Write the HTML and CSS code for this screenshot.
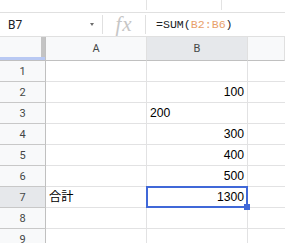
FILE: index.html
```html
<!DOCTYPE html>
<html lang="ja">
<head>
<meta charset="utf-8">
<link rel="stylesheet" href="styles.css">
</head>
<body>
<div class="app">
  <div class="topband"><span class="tick"></span><span class="tick tick2"></span></div>
  <div class="fbar">
    <div class="namebox"><span class="ref">B7</span><span class="caret"></span></div>
    <div class="sep"></div>
    <div class="fx">fx</div>
    <div class="sep"></div>
    <div class="formula">=SUM(<span class="rng">B2:B6</span>)</div>
  </div>
  <div class="grid">
    <div class="corner"><div class="vbar"></div><div class="hbar"></div></div>
    <div class="ch">A</div><div class="ch selh">B</div><div class="ch last"></div>

    <div class="rh">1</div><div class="c"></div><div class="c"></div><div class="c last"></div>
    <div class="rh">2</div><div class="c"></div><div class="c num">100</div><div class="c last"></div>
    <div class="rh">3</div><div class="c"></div><div class="c">200</div><div class="c last"></div>
    <div class="rh">4</div><div class="c"></div><div class="c num">300</div><div class="c last"></div>
    <div class="rh">5</div><div class="c"></div><div class="c num">400</div><div class="c last"></div>
    <div class="rh">6</div><div class="c"></div><div class="c num">500</div><div class="c last"></div>
    <div class="rh selh">7</div><div class="c">合計</div><div class="c num active">1300</div><div class="c last"></div>
    <div class="rh">8</div><div class="c"></div><div class="c"></div><div class="c last"></div>
    <div class="rh">9</div><div class="c"></div><div class="c"></div><div class="c last"></div>
  </div>
</div>
</body>
</html>
```
FILE: styles.css
```css
html, body {
  margin: 0;
  padding: 0;
  background: #fff;
}
.app {
  width: 285px;
  height: 243px;
  overflow: hidden;
  font-family: Roboto, "Liberation Sans", sans-serif;
}
.topband {
  height: 12px;
  border-bottom: 1px solid #e0e0e0;
  display: flex;
  padding-left: 146px;
}
.tick {
  width: 1px;
  height: 10px;
  background: #e3e3e3;
}
.tick2 {
  margin-left: 74px;
}
.fbar {
  height: 23px;
  border-bottom: 1px solid #e0e0e0;
  display: flex;
  align-items: center;
}
.namebox {
  width: 102px;
  height: 23px;
  display: flex;
  align-items: center;
  box-sizing: border-box;
  padding-left: 8px;
  padding-right: 8px;
}
.ref {
  flex: 1;
  font-size: 12px;
  color: #202124;
}
.caret {
  width: 0;
  height: 0;
  border-left: 2.5px solid transparent;
  border-right: 2.5px solid transparent;
  border-top: 3px solid #6d6d6d;
}
.sep {
  width: 1px;
  height: 19px;
  background: #e0e0e0;
}
.fx {
  width: 42px;
  text-align: center;
  font-family: "Liberation Serif", serif;
  font-style: italic;
  font-size: 21px;
  letter-spacing: 1px;
  color: #c6c6c6;
  line-height: 23px;
}
.formula {
  padding-left: 10px;
  font-family: "Liberation Mono", monospace;
  font-size: 11.6px;
  color: #202124;
}
.rng {
  color: #e8a06a;
}
.grid {
  display: grid;
  grid-template-columns: 46px 101px 101px 1fr;
  grid-template-rows: 24px;
  grid-auto-rows: 21px;
}
.grid > div {
  box-sizing: border-box;
  border-right: 1px solid #e2e2e3;
  border-bottom: 1px solid #e2e2e3;
}
.grid > .last {
  border-right: none;
}
.corner {
  background: #f8f9fa;
  display: grid;
  grid-template-columns: 1fr 4px;
  grid-template-rows: 1fr 3px;
}
.grid > .corner {
  border-right: 1px solid #c0c0c0;
  border-bottom: 1px solid #c0c0c0;
}
.vbar {
  grid-column: 2;
  grid-row: 1;
  background: #c4c4c4;
}
.hbar {
  grid-column: 1 / 3;
  grid-row: 2;
  background: #b9c9f3;
}
.ch {
  background: #f8f9fa;
  font-size: 11px;
  color: #444746;
  display: flex;
  align-items: center;
  justify-content: center;
}
.grid > .ch {
  border-bottom: 1px solid #c0c0c0;
  border-right: 1px solid #e0e0e0;
}
.grid > .selh {
  background: #e6e8eb;
}
.rh {
  background: #f8f9fa;
  font-size: 11px;
  color: #444746;
  display: flex;
  align-items: center;
  justify-content: center;
}
.grid > .rh {
  border-right: 1px solid #c0c0c0;
  border-bottom: 1px solid #c8c8c8;
}
.c {
  font-family: "Liberation Sans", "Noto Sans CJK JP", sans-serif;
  font-size: 12.2px;
  line-height: 20px;
  color: #000;
  padding: 0 3px;
  white-space: nowrap;
  overflow: visible;
}
.num {
  text-align: right;
}
.active {
  position: relative;
}
.active::after {
  content: "";
  position: absolute;
  left: -1px;
  top: -1px;
  right: -1px;
  bottom: -1px;
  border: 2px solid #4068d8;
}
.active::before {
  content: "";
  position: absolute;
  right: -3px;
  bottom: -3px;
  width: 6px;
  height: 6px;
  background: #4068d8;
  z-index: 1;
}
```
